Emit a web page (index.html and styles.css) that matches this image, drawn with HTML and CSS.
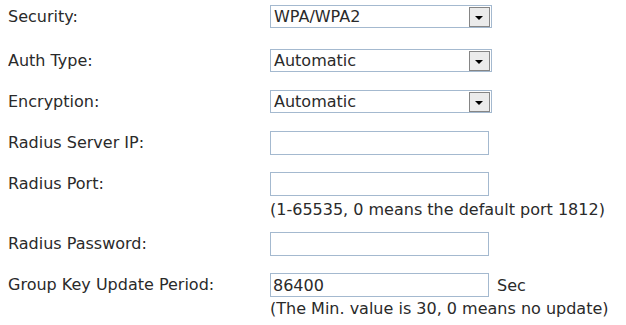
FILE: index.html
```html
<!DOCTYPE html>
<html lang="en">
<head>
    <meta charset="UTF-8">
    <title>Wireless Security</title>
    <link rel="stylesheet" href="styles.css">
</head>
<body>
    <div class="form">
        <div class="row first">
            <div class="label">Security:</div>
            <div class="field">
                <div class="select"><span>WPA/WPA2</span><span class="arrow"></span></div>
            </div>
        </div>
        <div class="row">
            <div class="label">Auth Type:</div>
            <div class="field">
                <div class="select"><span>Automatic</span><span class="arrow"></span></div>
            </div>
        </div>
        <div class="row">
            <div class="label">Encryption:</div>
            <div class="field">
                <div class="select"><span>Automatic</span><span class="arrow"></span></div>
            </div>
        </div>
        <div class="row">
            <div class="label">Radius Server IP:</div>
            <div class="field"><input type="text" class="text-input"></div>
        </div>
        <div class="row">
            <div class="label">Radius Port:</div>
            <div class="field">
                <input type="text" class="text-input">
                <div class="hint">(1-65535, 0 means the default port 1812)</div>
            </div>
        </div>
        <div class="row">
            <div class="label">Radius Password:</div>
            <div class="field"><input type="password" class="text-input"></div>
        </div>
        <div class="row">
            <div class="label">Group Key Update Period:</div>
            <div class="field">
                <div class="inline"><input type="text" class="text-input" value="86400"> <span class="unit">Sec</span></div>
                <div class="hint last">(The Min. value is 30, 0 means no update)</div>
            </div>
        </div>
    </div>
</body>
</html>
```

FILE: styles.css
```css
body {
    margin: 5px 8px 0;
    background: #fff;
    font-family: "DejaVu Sans", Verdana, sans-serif;
    font-size: 16px;
    color: #2a2a2a;
}
.form {
    display: flex;
    flex-direction: column;
    gap: 17px;
}
.row {
    display: flex;
}
.row.first {
    margin-bottom: 3px;
}
.label {
    width: 262px;
    height: 24px;
    line-height: 24px;
}
.field {
    display: flex;
    flex-direction: column;
}
.select {
    width: 217px;
    height: 21px;
    border: 1px solid #a4b9cf;
    display: flex;
    align-items: center;
    justify-content: space-between;
    padding-left: 3px;
}
.select span:first-child {
    line-height: 21px;
}
.arrow {
    width: 21px;
    height: 20px;
    margin-right: 1px;
    border: 1px solid #858585;
    box-sizing: border-box;
    background: #ebebeb;
    position: relative;
}
.arrow::after {
    content: "";
    position: absolute;
    left: 5px;
    top: 8px;
    border-left: 4px solid transparent;
    border-right: 4px solid transparent;
    border-top: 4px solid #000;
}
.text-input {
    width: 219px;
    height: 24px;
    margin: 0;
    padding: 0 2px;
    border: 1px solid #a4b9cf;
    box-sizing: border-box;
    font-family: "DejaVu Sans", Verdana, sans-serif;
    font-size: 16px;
    color: #2a2a2a;
    outline: none;
}
.inline {
    display: flex;
    align-items: center;
    gap: 8px;
}
.hint {
    line-height: 22px;
    margin-top: 3px;
    margin-bottom: -6px;
}
.hint.last {
    margin-top: 1px;
    margin-bottom: 0;
}
```
